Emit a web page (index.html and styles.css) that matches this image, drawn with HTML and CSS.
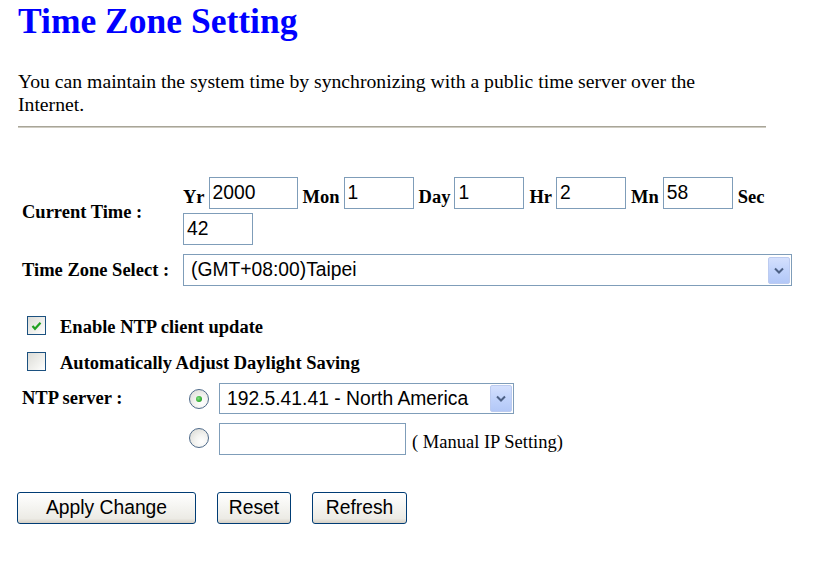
FILE: index.html
```html
<!DOCTYPE html>
<html>
<head>
<meta charset="utf-8">
<link rel="stylesheet" href="styles.css">
</head>
<body>
<div class="page">
  <h1 class="title">Time Zone Setting</h1>
  <p class="intro">You can maintain the system time by synchronizing with a public time server over the Internet.</p>
  <div class="rule"></div>

  <div class="form">
    <div class="row row-time">
      <div class="label">Current Time :</div>
      <div class="value time-fields">
        <span class="tl">Yr</span><span class="field w89">2000</span>
        <span class="tl">Mon</span><span class="field">1</span>
        <span class="tl">Day</span><span class="field">1</span>
        <span class="tl">Hr</span><span class="field">2</span>
        <span class="tl">Mn</span><span class="field">58</span>
        <span class="tl">Sec</span><span class="field">42</span>
      </div>
    </div>

    <div class="row row-tz">
      <div class="label">Time Zone Select :</div>
      <div class="value">
        <div class="select tz-select">
          <span class="select-text">(GMT+08:00)Taipei</span>
          <span class="drop"><svg width="10" height="7" viewBox="0 0 10 7"><path d="M1 1.5 L5 5.5 L9 1.5" fill="none" stroke="#4d6185" stroke-width="2"/></svg></span>
        </div>
      </div>
    </div>

    <div class="row row-cb first-cb">
      <span class="checkbox"><svg width="11" height="10" viewBox="0 0 11 10"><path d="M1.5 5 L4 7.8 L9.5 1.8" fill="none" stroke="#21a121" stroke-width="2.2"/></svg></span>
      <span class="cb-text">Enable NTP client update</span>
    </div>
    <div class="row row-cb second-cb">
      <span class="checkbox"></span>
      <span class="cb-text">Automatically Adjust Daylight Saving</span>
    </div>

    <div class="row row-ntp">
      <div class="label">NTP server :</div>
      <div class="value radio-line">
        <span class="radio on"><span class="dot"></span></span>
        <div class="select ntp-select">
          <span class="select-text">192.5.41.41 - North America</span>
          <span class="drop"><svg width="10" height="7" viewBox="0 0 10 7"><path d="M1 1.5 L5 5.5 L9 1.5" fill="none" stroke="#4d6185" stroke-width="2"/></svg></span>
        </div>
      </div>
    </div>

    <div class="row row-manual">
      <div class="label"></div>
      <div class="value radio-line">
        <span class="radio"></span>
        <span class="field w186"></span>
        <span class="manual-note">( Manual IP Setting)</span>
      </div>
    </div>
  </div>

  <div class="buttons">
    <span class="btn w179">Apply Change</span>
    <span class="btn w74">Reset</span>
    <span class="btn w95">Refresh</span>
  </div>
</div>
</body>
</html>
```

FILE: styles.css
```css
html, body {
  margin: 0;
  padding: 0;
  background: #ffffff;
}

.page {
  padding-left: 18px;
  width: 748px;
  font-family: "Liberation Serif", "Times New Roman", serif;
  color: #000;
}

.title {
  margin: 1px 0 0 0;
  font-size: 35.5px;
  line-height: 40px;
  font-weight: bold;
  color: #0000ff;
}

.intro {
  margin: 29px 0 0 0;
  max-width: 720px;
  font-size: 19.7px;
  line-height: 23px;
}

.rule {
  margin-top: 10px;
  height: 0;
  border-top: 1px solid #a8a598;
  border-bottom: 1px solid #cfccc2;
}

.form {
  padding-left: 4px;
  width: 772px;
}

.row {
  display: flex;
  align-items: center;
}

.label {
  width: 161px;
  flex: none;
  font-weight: bold;
  font-size: 18.5px;
  line-height: 20px;
}

.value {
  flex: 1;
  min-width: 0;
}

.row-time {
  margin-top: 49px;
  height: 67px;
}

.row-time .label {
  margin-top: 2px;
}

.time-fields {
  display: flex;
  flex-wrap: wrap;
  align-items: flex-end;
  row-gap: 4px;
  width: 610px;
}

.tl {
  font-weight: bold;
  font-size: 18.5px;
  line-height: 20px;
  margin-right: 4px;
  margin-bottom: 2px;
}

.field {
  box-sizing: border-box;
  display: inline-block;
  width: 70px;
  height: 32px;
  border: 1px solid #7f9db9;
  background: #fff;
  padding: 0 3px;
  font-family: "Liberation Sans", Arial, sans-serif;
  font-size: 19.3px;
  line-height: 30px;
  margin-right: 5px;
}

.field.w89 { width: 89px; }
.field.w186 { width: 187px; margin-right: 6px; }

.row-tz {
  margin-top: 10px;
  height: 32px;
}

.select {
  box-sizing: border-box;
  display: flex;
  align-items: center;
  justify-content: space-between;
  height: 32px;
  border: 1px solid #7f9db9;
  background: #fff;
  padding: 0 1px 0 7px;
  font-family: "Liberation Sans", Arial, sans-serif;
  font-size: 19.3px;
}

.tz-select { width: 609px; }
.ntp-select { width: 295px; }

.drop {
  box-sizing: border-box;
  width: 22px;
  height: 27px;
  border: 1px solid #bccbf0;
  border-radius: 2px;
  background: linear-gradient(to bottom, #d4e0fd 0%, #c1d3fb 50%, #b3c8f7 100%);
  display: flex;
  align-items: center;
  justify-content: center;
}

.row-cb {
  height: 19px;
  padding-left: 5px;
}

.first-cb { margin-top: 30px; }
.second-cb { margin-top: 17px; }

.checkbox {
  box-sizing: border-box;
  width: 19px;
  height: 19px;
  flex: none;
  border: 1px solid #1c5180;
  background: linear-gradient(135deg, #dcdcd7 0%, #f4f4f1 70%, #ffffff 100%);
  display: flex;
  align-items: center;
  justify-content: center;
}

.cb-text {
  margin-left: 14px;
  font-weight: bold;
  font-size: 18.5px;
  line-height: 20px;
  padding-top: 2px;
}

.row-ntp {
  margin-top: 12px;
  height: 31px;
}

.row-ntp .label {
  margin-top: -2px;
}

.radio-line {
  display: flex;
  align-items: center;
}

.radio {
  box-sizing: border-box;
  width: 20px;
  height: 20px;
  flex: none;
  margin-left: 6px;
  margin-right: 10px;
  border-radius: 50%;
  border: 1px solid #4e6a8a;
  background: radial-gradient(circle at 65% 70%, #ffffff 0%, #f3f3f0 40%, #d6d6d0 100%);
  display: flex;
  align-items: center;
  justify-content: center;
}

.radio .dot {
  width: 6px;
  height: 6px;
  border-radius: 50%;
  background: radial-gradient(circle at 40% 40%, #7fe07f 0%, #2aa52a 70%, #1c8c1c 100%);
}

.row-ntp .ntp-select { height: 31px; }

.row-manual {
  margin-top: 9px;
  height: 32px;
}

.row-manual .radio {
  margin-top: -3px;
}

.manual-note {
  font-size: 18.5px;
  line-height: 20px;
  margin-top: 6px;
}

.buttons {
  display: flex;
  gap: 21px;
  margin-top: 37px;
  margin-left: -1px;
}

.btn {
  box-sizing: border-box;
  height: 32px;
  border: 1px solid #003c74;
  border-radius: 3px;
  background: linear-gradient(to bottom, #ffffff 0%, #f6f6f3 40%, #ecebe5 85%, #d6d0c5 100%);
  font-family: "Liberation Sans", Arial, sans-serif;
  font-size: 19.3px;
  line-height: 30px;
  text-align: center;
  color: #000;
}

.btn.w179 { width: 179px; }
.btn.w74 { width: 74px; }
.btn.w95 { width: 95px; }
```
